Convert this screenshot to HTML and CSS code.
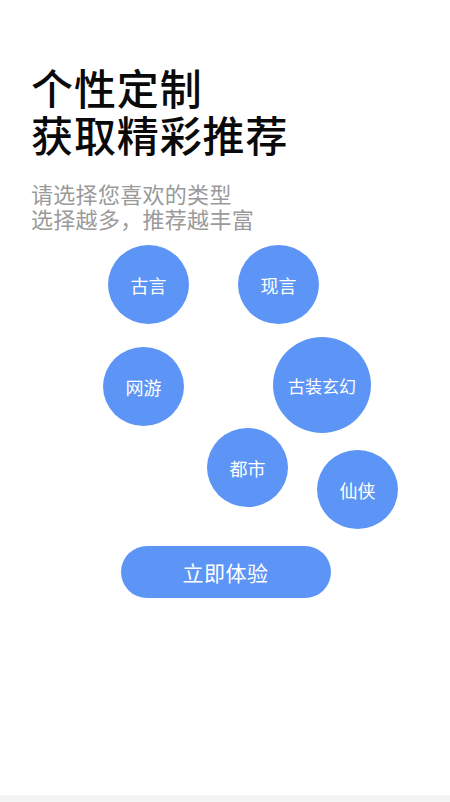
FILE: index.html
```html
<!DOCTYPE html>
<html lang="zh-CN">
<head>
<meta charset="utf-8">
<title>个性定制</title>
<link rel="stylesheet" href="styles.css">
</head>
<body>
<main class="page">
  <header class="intro">
    <h1 class="title"><span class="line">个性定制</span><span class="line">获取精彩推荐</span></h1>
    <p class="subtitle"><span class="sline">请选择您喜欢的类型</span><span class="sline">选择越多，推荐越丰富</span></p>
  </header>
  <section class="bubbles">
    <button class="bubble b1">古言</button>
    <button class="bubble b2">现言</button>
    <button class="bubble b3">网游</button>
    <button class="bubble b4 big">古装玄幻</button>
    <button class="bubble b5">都市</button>
    <button class="bubble b6">仙侠</button>
  </section>
  <div class="action">
    <button class="cta">立即体验</button>
  </div>
  <div class="bottom-bar"></div>
</main>
</body>
</html>
```

FILE: styles.css
```css
* { box-sizing: border-box; }
html, body {
  margin: 0;
  padding: 0;
  background: #ffffff;
}
body {
  font-family: "Noto Sans CJK SC", "Noto Sans", sans-serif;
  width: 450px;
  height: 802px;
  overflow: hidden;
}
.page {
  display: flex;
  flex-direction: column;
  height: 802px;
}
.intro {
  padding: 63px 0 0 31px;
}
.title {
  margin: 0;
  font-size: 42px;
  font-weight: 500;
  color: #0a0a0a;
  letter-spacing: 0.9px;
  display: flex;
  flex-direction: column;
}
.title .line {
  display: block;
  height: 47px;
  line-height: 47px;
}
.subtitle {
  margin: 24px 0 0 0;
  font-size: 22px;
  color: #9a9a9a;
  font-weight: 400;
  letter-spacing: 0.3px;
  display: flex;
  flex-direction: column;
}
.subtitle .sline {
  display: block;
  height: 25px;
  line-height: 25px;
}
.bubbles {
  position: relative;
  height: 300px;
  margin-top: 8px;
}
.bubble {
  position: absolute;
  width: 81px;
  height: 79px;
  border-radius: 50%;
  border: none;
  background: #5d95f6;
  color: #ffffff;
  font-family: "Noto Sans CJK SC", sans-serif;
  font-size: 18px;
  padding: 0;
  display: flex;
  align-items: center;
  justify-content: center;
}
.bubble.big {
  width: 98px;
  height: 96px;
  font-size: 17px;
}
.b1 { left: 108px; top: 6px; }
.b2 { left: 238px; top: 6px; }
.b3 { left: 103px; top: 108px; }
.b4 { left: 273px; top: 98px; }
.b5 { left: 207px; top: 189px; }
.b6 { left: 317px; top: 211px; }
.action {
  display: flex;
  justify-content: center;
  padding-left: 1px;
  margin-top: 7px;
}
.cta {
  width: 210px;
  height: 52px;
  border-radius: 26px;
  border: none;
  background: #5d95f6;
  color: #ffffff;
  font-family: "Noto Sans CJK SC", sans-serif;
  font-size: 21px;
  font-weight: 400;
  letter-spacing: 0.5px;
}
.bottom-bar {
  margin-top: auto;
  height: 7px;
  background: #f4f4f4;
}
```
